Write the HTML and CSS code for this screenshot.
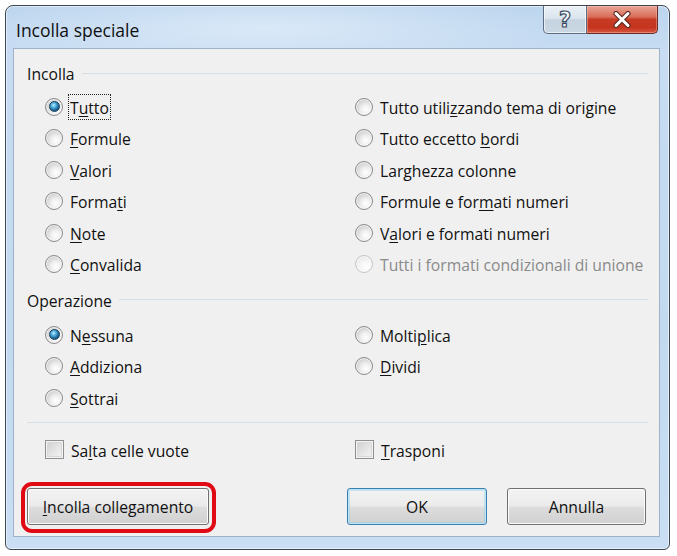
FILE: index.html
```html
<!DOCTYPE html>
<html lang="it">
<head>
<meta charset="utf-8">
<title>Incolla speciale</title>
<link rel="stylesheet" href="styles.css">
</head>
<body>
<div class="window">
  <div class="titlebar">
    <div class="title">Incolla speciale</div>
    <div class="caps">
      <div class="cap help"><span class="q">?</span></div>
      <div class="cap close">
        <svg width="20" height="17" viewBox="0 0 20 17">
          <path d="M4 2.5 L16 14.5 M16 2.5 L4 14.5" stroke="#5a2a22" stroke-width="5.2" stroke-linecap="round" fill="none"/>
          <path d="M4 2.5 L16 14.5 M16 2.5 L4 14.5" stroke="#ffffff" stroke-width="3" stroke-linecap="round" fill="none"/>
        </svg>
      </div>
    </div>
  </div>
  <div class="client">
    <div class="group-label"><span>Incolla</span><span class="rule"></span></div>
    <div class="opts six">
      <div class="opt"><span class="radio checked"></span><span class="txt focus">T<u>u</u>tto</span></div>
      <div class="opt"><span class="radio"></span><span class="txt">Tutto utili<u>z</u>zando tema di origine</span></div>
      <div class="opt"><span class="radio"></span><span class="txt"><u>F</u>ormule</span></div>
      <div class="opt"><span class="radio"></span><span class="txt">Tutto eccetto <u>b</u>ordi</span></div>
      <div class="opt"><span class="radio"></span><span class="txt"><u>V</u>alori</span></div>
      <div class="opt"><span class="radio"></span><span class="txt">Lar<u>g</u>hezza colonne</span></div>
      <div class="opt"><span class="radio"></span><span class="txt">Forma<u>t</u>i</span></div>
      <div class="opt"><span class="radio"></span><span class="txt">Formule e for<u>m</u>ati numeri</span></div>
      <div class="opt"><span class="radio"></span><span class="txt"><u>N</u>ote</span></div>
      <div class="opt"><span class="radio"></span><span class="txt">V<u>a</u>lori e formati numeri</span></div>
      <div class="opt"><span class="radio"></span><span class="txt"><u>C</u>onvalida</span></div>
      <div class="opt disabled"><span class="radio"></span><span class="txt">Tutti i formati condizionali di unione</span></div>
    </div>
    <div class="group-label second"><span>Operazione</span><span class="rule"></span></div>
    <div class="opts three">
      <div class="opt"><span class="radio checked"></span><span class="txt">N<u>e</u>ssuna</span></div>
      <div class="opt"><span class="radio"></span><span class="txt">Molti<u>p</u>lica</span></div>
      <div class="opt"><span class="radio"></span><span class="txt"><u>A</u>ddiziona</span></div>
      <div class="opt"><span class="radio"></span><span class="txt"><u>D</u>ividi</span></div>
      <div class="opt"><span class="radio"></span><span class="txt"><u>S</u>ottrai</span></div>
    </div>
    <div class="separator"></div>
    <div class="opts checks">
      <div class="opt"><span class="check"></span><span class="txt">Sa<u>l</u>ta celle vuote</span></div>
      <div class="opt"><span class="check"></span><span class="txt"><u>T</u>rasponi</span></div>
    </div>
    <div class="buttons">
      <div class="btn link highlighted"><span><u>I</u>ncolla collegamento</span></div>
      <div class="btn ok default">OK</div>
      <div class="btn cancel">Annulla</div>
    </div>
  </div>
</div>
</body>
</html>
```
FILE: styles.css
```css
html, body {
  margin: 0;
  padding: 0;
  background: #ffffff;
}
body {
  font-family: "Open Sans", "Noto Sans", "DejaVu Sans", sans-serif;
  color: #111111;
}
.window {
  box-sizing: border-box;
  width: 665px;
  height: 545px;
  margin: 5px 0 0 5px;
  border: 1px solid #3e4652;
  border-radius: 8px 8px 6px 6px;
  background:
    radial-gradient(ellipse 300px 40px at 260px 22px, rgba(226,238,250,0.75), rgba(226,238,250,0) 100%),
    linear-gradient(180deg, #bcd5ee 0%, #c7dcf2 8%, #c2d9f0 60%, #c9def3 100%);
  box-shadow: inset 0 0 0 1px rgba(255,255,255,0.55);
  padding: 0 9px 12px 7px;
  display: flex;
  flex-direction: column;
}
.titlebar {
  height: 42px;
  flex: none;
  display: flex;
  align-items: flex-start;
}
.title {
  flex: 1;
  padding: 12px 0 0 3px;
  font-size: 17.5px;
  line-height: 24px;
  color: #101010;
}
.caps {
  display: flex;
  margin-right: 2px;
}
.cap {
  box-sizing: border-box;
  height: 28px;
  border: 1px solid #5d6c80;
  border-top: none;
  display: flex;
  align-items: center;
  justify-content: center;
}
.help {
  width: 44px;
  border-radius: 0 0 0 5px;
  background: linear-gradient(180deg, #eaf0f6 0%, #dbe5ee 45%, #c5d3e0 52%, #cad7e3 100%);
  box-shadow: inset 0 0 0 1px rgba(255,255,255,0.6);
}
.q {
  font-family: "DejaVu Sans", sans-serif;
  font-weight: bold;
  font-size: 21px;
  line-height: 24px;
  color: #f6f9fc;
  -webkit-text-stroke: 1.2px #3b4c60;
}
.close {
  width: 71px;
  border-left: none;
  border-color: #6a2c22;
  border-radius: 0 0 5px 0;
  background: linear-gradient(180deg, #e9a596 0%, #d96e5a 40%, #c73b24 50%, #c5341e 80%, #d65a43 100%);
  box-shadow: inset 0 0 0 1px rgba(255,200,190,0.4);
}
.close svg {
  display: block;
}
.client {
  box-sizing: border-box;
  flex: none;
  height: 489px;
  border: 1px solid #9fb3c8;
  background: #f0f0f0;
  padding: 12px 11px 0 13px;
  display: flex;
  flex-direction: column;
  font-size: 15.7px;
}
.group-label {
  box-sizing: border-box;
  height: 24px;
  padding-top: 2px;
  display: flex;
  align-items: center;
  line-height: 22px;
  color: #111111;
}
.group-label .rule {
  flex: 1;
  height: 1px;
  background: #d5dfe5;
  margin-left: 7px;
  margin-top: -2px;
}
.group-label.second {
  margin-top: 8.3px;
}
.opts {
  display: grid;
  grid-template-columns: 310px 1fr;
  margin-left: 18px;
}
.opts.six {
  margin-top: 6.3px;
  grid-auto-rows: 31.4px;
}
.opts.three {
  margin-top: 7.3px;
  grid-auto-rows: 31.4px;
}
.opts.checks {
  margin-top: 13px;
  grid-auto-rows: 28px;
}
.opt {
  display: flex;
  align-items: center;
}
.txt {
  margin-left: 5px;
  padding: 2px 1px 0;
  border: 1px solid transparent;
  line-height: 22px;
  white-space: nowrap;
  color: #111111;
}
.txt.focus {
  border: 1px dotted #222;
}
u {
  text-decoration: underline;
  text-decoration-thickness: 1px;
  text-underline-offset: 2px;
}
.radio {
  position: relative;
  flex: none;
  box-sizing: border-box;
  width: 18px;
  height: 18px;
  border-radius: 50%;
  border: 1px solid #8a8a8a;
  background: radial-gradient(circle at 62% 66%, #ffffff 0%, #f0f0f0 32%, #d2d2d2 68%, #e2e2e2 100%);
  box-shadow: inset 0 0 0 1px rgba(255,255,255,0.7);
}
.radio.checked::after {
  content: "";
  position: absolute;
  left: 2.5px;
  top: 2.5px;
  width: 11px;
  height: 11px;
  box-sizing: border-box;
  border-radius: 50%;
  border: 1px solid #143f5c;
  background: radial-gradient(circle at 40% 35%, #c0efff 0%, #5cb8e4 26%, #226c9c 60%, #0e3a59 100%);
}
.disabled .radio {
  border-color: #c4c4c4;
  background: radial-gradient(circle at 62% 66%, #ffffff 0%, #f6f6f6 40%, #e6e6e6 80%, #eeeeee 100%);
}
.disabled .txt {
  color: #8a8a8a;
}
.check {
  flex: none;
  box-sizing: border-box;
  width: 19px;
  height: 19px;
  border: 1px solid #8e8f8f;
  background: linear-gradient(135deg, #cdcdcd 0%, #e3e3e3 50%, #f6f6f6 100%);
  box-shadow: inset 0 0 0 1px #f4f4f4, inset 0 0 0 2px #d8d8d8;
}
.separator {
  height: 1px;
  background: #d5dfe5;
  margin-top: 8.5px;
}
.buttons {
  display: flex;
  margin-top: 24px;
  margin-right: 2px;
}
.btn {
  box-sizing: border-box;
  height: 37px;
  padding-top: 2px;
  border: 1px solid #707070;
  border-radius: 3px;
  background: linear-gradient(180deg, #f3f3f3 0%, #ebebeb 48%, #dddddd 52%, #d0d0d0 100%);
  box-shadow: inset 0 0 0 1px #fbfbfb;
  display: flex;
  align-items: center;
  justify-content: center;
  color: #111111;
  font-size: 15.7px;
  line-height: 20px;
}
.btn.link {
  width: 182px;
  position: relative;
}
.btn.highlighted::after {
  content: "";
  position: absolute;
  top: -7px;
  left: -7px;
  right: -8px;
  bottom: -9px;
  border: 4px solid #e00a14;
  border-radius: 11px;
  pointer-events: none;
}
.btn.ok {
  width: 140px;
  margin-left: auto;
}
.btn.default {
  border-color: #3c7fb1;
  box-shadow: inset 0 0 0 1px #b9e4f6, inset 0 0 0 2px rgba(120,200,235,0.35);
}
.btn.cancel {
  width: 139px;
  margin-left: 20px;
}
```
